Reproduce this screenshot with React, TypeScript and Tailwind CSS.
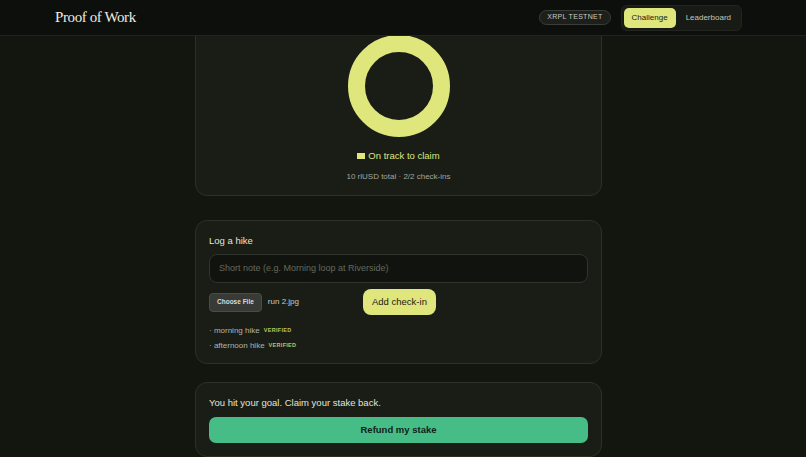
import React from "react";

const sans = { fontFamily: '"Liberation Sans", Arial, sans-serif' };

function Donut() {
  return (
    <svg width="102" height="102" viewBox="0 0 102 102">
      <circle cx="51" cy="51" r="42.5" fill="none" stroke="#dee67c" strokeWidth="17" />
    </svg>
  );
}

export default function App() {
  const checkins = ["morning hike", "afternoon hike"];

  return (
    <div className="h-[457px] overflow-hidden bg-[#13160f] flex flex-col" style={sans}>
      <header className="h-[36px] shrink-0 bg-[#0c0f0b] border-b border-[#20241d] flex items-center justify-between pl-[55px] pr-[64px] z-10">
        <span className="font-['Liberation_Serif',serif] text-[15px] tracking-[-0.4px] text-[#ecece4]">Proof of Work</span>
        <div className="flex items-center gap-[10px]">
          <span className="h-[15px] px-[7px] flex items-center rounded-full border border-[#3a3d37] bg-[#1c1f1a] text-[7px] tracking-[0.3px] text-[#c9cbc4]">XRPL TESTNET</span>
          <nav className="flex items-center gap-[2px] p-[2px] rounded-[6px] bg-[#171a15] border border-[#22251f]">
            <span className="h-[20px] px-[8px] flex items-center rounded-[5px] bg-[#dee67c] text-[8px] text-[#20221a]">Challenge</span>
            <span className="h-[20px] px-[8px] flex items-center text-[8px] text-[#c4c6bf]">Leaderboard</span>
          </nav>
        </div>
      </header>

      <main className="flex-1 overflow-hidden">
        <div className="w-[407px] ml-[195px] mt-[-26px] flex flex-col">
          <section className="rounded-[12px] border border-[#2c3027] bg-[#1a1d16] pt-[24px] pb-[11px] flex flex-col items-center">
            <Donut />
            <div className="mt-[12px] h-[14px] flex items-center gap-[3px] text-[9.5px] text-[#dee67c]">
              <span className="w-[8px] h-[6px] bg-[#dee67c]" />
              On track to claim
            </div>
            <div className="mt-[7px] h-[14px] flex items-center text-[8px] text-[#a3a69d]">10 rlUSD total · 2/2 check-ins</div>
          </section>

          <section className="mt-[24px] rounded-[12px] border border-[#2c3027] bg-[#1a1d16] px-[13px] pt-[13px] pb-[10px]">
            <h2 className="h-[14px] flex items-center text-[9.5px] text-[#e2e3dc]">Log a hike</h2>
            <div className="mt-[6px] h-[29px] rounded-[8px] border border-[#30342c] bg-[#11140e] px-[9px] flex items-center text-[9px] text-[#64685e]">
              Short note (e.g. Morning loop at Riverside)
            </div>
            <div className="mt-[6px] flex items-center gap-[8px]">
              <div className="w-[146px] flex items-center gap-[6px]">
                <span className="h-[19px] px-[7px] flex items-center rounded-[4px] border border-[#4a4d46] bg-[#383b35] text-[6.5px] font-bold text-[#dcdcd6]">Choose File</span>
                <span className="text-[8px] text-[#c9cbc4]">run 2.jpg</span>
              </div>
              <button className="h-[26px] px-[9px] rounded-[8px] bg-[#dee67c] text-[9.5px] text-[#1e2016]">Add check-in</button>
            </div>
            <ul className="mt-[8px] flex flex-col">
              {checkins.map((c) => (
                <li key={c} className="h-[15px] flex items-center gap-[4px] text-[8px] text-[#b1b4ab]">
                  <span>· {c}</span>
                  <span className="text-[5.5px] font-bold tracking-[0.3px] text-[#b9c55f]">VERIFIED</span>
                </li>
              ))}
            </ul>
          </section>

          <section className="mt-[18px] rounded-[12px] border border-[#2c3027] bg-[#1a1d16] px-[13px] pt-[13px] pb-[13px]">
            <p className="h-[14px] flex items-center text-[9.5px] text-[#e2e3dc]">You hit your goal. Claim your stake back.</p>
            <button className="mt-[7px] w-full h-[26px] rounded-[7px] bg-[#46bd86] text-[9.5px] font-bold text-[#0e2418]">Refund my stake</button>
          </section>
        </div>
      </main>
    </div>
  );
}
